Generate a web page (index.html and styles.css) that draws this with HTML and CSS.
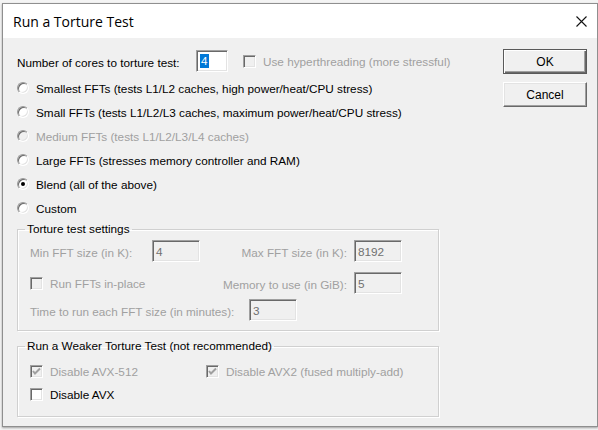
FILE: index.html
```html
<!DOCTYPE html>
<html>
<head>
<meta charset="utf-8">
<link rel="stylesheet" href="styles.css">
</head>
<body>
<div class="window">
  <div class="titlebar">
    <span class="title">Run a Torture Test</span>
    <svg class="close" width="11" height="11" viewBox="0 0 11 11"><path d="M0.5 0.5 L10.5 10.5 M10.5 0.5 L0.5 10.5" stroke="#111" stroke-width="1.1" fill="none"/></svg>
  </div>
  <div class="client">
    <div class="main">
      <div class="row cores">
        <span class="cores-label">Number of cores to torture test:</span>
        <span class="edit cores-edit"><span class="sel">4</span></span>
        <span class="check ht disabled"><span class="box dis"></span><span>Use hyperthreading (more stressful)</span></span>
      </div>
      <div class="radios">
        <div class="radio-row"><span class="radio"></span><span>Smallest FFTs (tests L1/L2 caches, high power/heat/CPU stress)</span></div>
        <div class="radio-row"><span class="radio"></span><span>Small FFTs (tests L1/L2/L3 caches, maximum power/heat/CPU stress)</span></div>
        <div class="radio-row disabled"><span class="radio dis"></span><span>Medium FFTs (tests L1/L2/L3/L4 caches)</span></div>
        <div class="radio-row"><span class="radio"></span><span>Large FFTs (stresses memory controller and RAM)</span></div>
        <div class="radio-row"><span class="radio on"></span><span>Blend (all of the above)</span></div>
        <div class="radio-row"><span class="radio"></span><span>Custom</span></div>
      </div>
      <fieldset class="group g1">
        <legend>Torture test settings</legend>
        <div class="settings-grid">
          <span class="lbl">Min FFT size (in K):</span>
          <span class="edit dis">4</span>
          <span class="lbl right">Max FFT size (in K):</span>
          <span class="edit dis">8192</span>
          <span class="check span2 disabled"><span class="box dis"></span><span>Run FFTs in-place</span></span>
          <span class="lbl right">Memory to use (in GiB):</span>
          <span class="edit dis">5</span>
        </div>
        <div class="time-row">
          <span class="lbl time-lbl">Time to run each FFT size (in minutes):</span>
          <span class="edit dis">3</span>
        </div>
      </fieldset>
      <fieldset class="group g2">
        <legend>Run a Weaker Torture Test (not recommended)</legend>
        <div class="avx-row">
          <span class="check avx512 disabled"><span class="box dis"><svg width="11" height="11" viewBox="0 0 11 11"><path d="M2 5 L4 7.5 L9 2.5" stroke="#a0a0a0" stroke-width="2" fill="none"/></svg></span><span>Disable AVX-512</span></span>
          <span class="check disabled"><span class="box dis"><svg width="11" height="11" viewBox="0 0 11 11"><path d="M2 5 L4 7.5 L9 2.5" stroke="#a0a0a0" stroke-width="2" fill="none"/></svg></span><span>Disable AVX2 (fused multiply-add)</span></span>
        </div>
        <div class="avx-row">
          <span class="check"><span class="box"></span><span>Disable AVX</span></span>
        </div>
      </fieldset>
    </div>
    <div class="buttons">
      <button class="btn default">OK</button>
      <button class="btn">Cancel</button>
    </div>
  </div>
</div>
</body>
</html>
```
FILE: styles.css
```css
html, body {
  margin: 0;
}
body {
  width: 598px;
  height: 430px;
  overflow: hidden;
  box-sizing: border-box;
  padding: 3px 0 0 2px;
  background: #f4f4f4;
  font-family: "Liberation Sans", Arial, sans-serif;
  font-size: 11.75px;
  color: #000;
}
.window {
  width: 596px;
  height: 424px;
  box-sizing: border-box;
  border: 1px solid #8f8f8f;
  background: #f0f0f0;
  box-shadow: 0 1px 2px rgba(0, 0, 0, 0.35);
  display: flex;
  flex-direction: column;
}
.titlebar {
  height: 34px;
  flex: none;
  background: #fff;
  display: flex;
  align-items: center;
  justify-content: space-between;
  padding: 0 10px 0 10px;
}
.title {
  font-family: "Open Sans", "Liberation Sans", sans-serif;
  font-size: 14px;
  color: #000;
}
.close {
  display: block;
  margin-top: 1px;
}
.client {
  flex: 1;
  display: flex;
  padding: 11px 0 0 14px;
}
.main {
  width: 485px;
  padding-top: 1px;
}
.row {
  display: flex;
  align-items: center;
  height: 22px;
}
.cores-label {
  width: 179px;
  padding-top: 2px;
}
.edit {
  box-sizing: border-box;
  height: 22px;
  width: 48px;
  border: 1px solid;
  border-color: #a0a0a0 #ffffff #ffffff #a0a0a0;
  box-shadow: inset 1px 1px 0 #696969, inset -1px -1px 0 #e3e3e3;
  background: #fff;
  padding-left: 3px;
  display: flex;
  align-items: center;
}
.edit.dis {
  background: #f0f0f0;
  color: #707070;
}
.cores-edit {
  width: 32px;
}
.sel {
  background: #0078d7;
  color: #fff;
  line-height: 14px;
  padding: 0 1px;
}
.check {
  display: flex;
  align-items: center;
  gap: 7px;
}
.check.disabled {
  color: #a0a0a0;
}
.ht {
  margin-left: 15px;
  gap: 7px;
}
.box {
  width: 13px;
  height: 13px;
  flex: none;
  box-sizing: border-box;
  border: 1px solid;
  border-color: #a0a0a0 #ffffff #ffffff #a0a0a0;
  box-shadow: inset 1px 1px 0 #696969, inset -1px -1px 0 #e3e3e3;
  background: #fff;
  display: flex;
  align-items: center;
  justify-content: center;
}
.box.dis {
  background: #f0f0f0;
}
.box svg {
  display: block;
}
.radios {
  margin-top: 4px;
}
.radio-row {
  height: 24px;
  display: flex;
  align-items: center;
  gap: 7px;
}
.radio-row.disabled {
  color: #a0a0a0;
}
.radio {
  width: 12px;
  height: 12px;
  flex: none;
  box-sizing: border-box;
  border-radius: 50%;
  border: 1px solid;
  border-color: #9a9a9a #ffffff #ffffff #9a9a9a;
  box-shadow: inset 1px 1px 0 #6a6a6a, inset -1px -1px 0 #e3e3e3;
  background: #fff;
  display: flex;
  align-items: center;
  justify-content: center;
}
.radio.dis {
  background: #f0f0f0;
}
.radio.on::after {
  content: "";
  width: 4px;
  height: 4px;
  border-radius: 50%;
  background: #000;
}
.group {
  box-sizing: border-box;
  width: 422px;
  margin: 0;
  border: 1px solid #d0d0d0;
  box-shadow: 1px 1px 0 #ffffff, inset 1px 1px 0 #ffffff;
  padding: 0 0 0 12px;
  min-width: 0;
}
.group legend {
  padding: 0 2px;
  margin-left: -5px;
  line-height: 14px;
}
.g1 {
  margin-top: 2px;
  padding-top: 4px;
  padding-bottom: 9px;
}
.g2 {
  margin-top: 8px;
  padding-top: 7px;
  padding-bottom: 10px;
}
.settings-grid {
  display: grid;
  grid-template-columns: 122px 48px 154px 48px;
  grid-template-rows: 22px 22px;
  row-gap: 10px;
  align-items: center;
}
.lbl {
  color: #a0a0a0;
  padding-top: 2px;
}
.lbl.right {
  text-align: right;
  padding-right: 7px;
}
.span2 {
  grid-column: 1 / 3;
}
.time-row {
  margin-top: 5px;
  height: 22px;
  display: flex;
  align-items: center;
}
.time-lbl {
  width: 219px;
}
.avx-row {
  height: 23px;
  display: flex;
  align-items: center;
}
.avx512 {
  width: 176px;
}
.buttons {
  width: 84px;
  flex: none;
  display: flex;
  flex-direction: column;
  gap: 8px;
  margin-left: 1px;
}
.btn {
  box-sizing: border-box;
  width: 84px;
  height: 25px;
  padding: 0;
  font-family: "Liberation Sans", Arial, sans-serif;
  font-size: 12px;
  color: #000;
  background: #f0f0f0;
  border: 1px solid;
  border-color: #ffffff #696969 #696969 #ffffff;
  box-shadow: inset -1px -1px 0 #a0a0a0, inset 1px 1px 0 #e3e3e3;
}
.btn.default {
  border: 1px solid #5a5a5a;
  box-shadow: inset 1px 1px 0 #ffffff, inset -1px -1px 0 #696969, inset -2px -2px 0 #a0a0a0;
}
```
